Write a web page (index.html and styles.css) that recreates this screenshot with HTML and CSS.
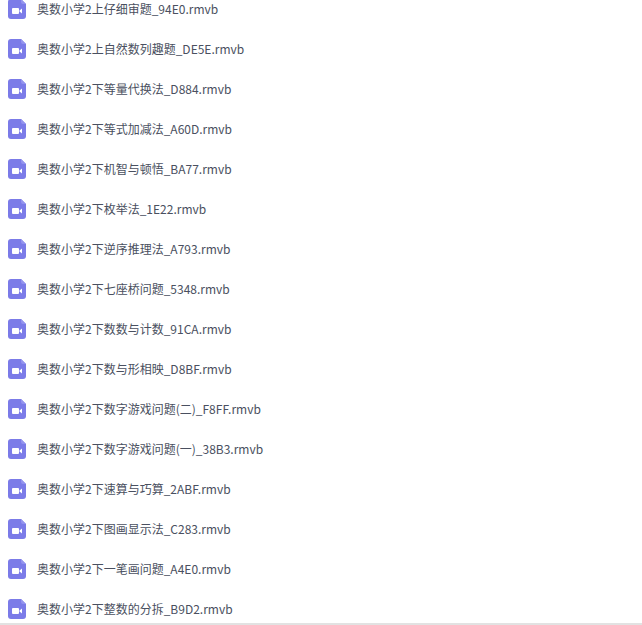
FILE: index.html
```html
<!DOCTYPE html>
<html lang="zh-CN">
<head>
    <meta charset="UTF-8">
    <meta name="viewport" content="width=device-width, initial-scale=1.0">
    <title>奥数小学2</title>
    <link rel="stylesheet" href="styles.css">
</head>
<body>
  <svg class="sprite" width="0" height="0">
    <symbol id="video" viewBox="0 0 18 20">
      <path d="M3 0H13L18 5V17A3 3 0 0 1 15 20H3A3 3 0 0 1 0 17V3A3 3 0 0 1 3 0Z" fill="#7b7be8"/>
      <path d="M13 0L18 5H15A2 2 0 0 1 13 3Z" fill="#9494ee"/>
      <rect x="4" y="9" width="7" height="6" rx="1" fill="#fff"/>
      <path d="M11.5 11.5L14 9.5V14.5L11.5 12.5Z" fill="#fff"/>
    </symbol>
  </svg>

  <ul class="file-list">
    <li class="file"><svg class="file-icon"><use href="#video"/></svg><span>奥数小学2上仔细审题_94E0.rmvb</span></li>
    <li class="file"><svg class="file-icon"><use href="#video"/></svg><span>奥数小学2上自然数列趣题_DE5E.rmvb</span></li>
    <li class="file"><svg class="file-icon"><use href="#video"/></svg><span>奥数小学2下等量代换法_D884.rmvb</span></li>
    <li class="file"><svg class="file-icon"><use href="#video"/></svg><span>奥数小学2下等式加减法_A60D.rmvb</span></li>
    <li class="file"><svg class="file-icon"><use href="#video"/></svg><span>奥数小学2下机智与顿悟_BA77.rmvb</span></li>
    <li class="file"><svg class="file-icon"><use href="#video"/></svg><span>奥数小学2下枚举法_1E22.rmvb</span></li>
    <li class="file"><svg class="file-icon"><use href="#video"/></svg><span>奥数小学2下逆序推理法_A793.rmvb</span></li>
    <li class="file"><svg class="file-icon"><use href="#video"/></svg><span>奥数小学2下七座桥问题_5348.rmvb</span></li>
    <li class="file"><svg class="file-icon"><use href="#video"/></svg><span>奥数小学2下数数与计数_91CA.rmvb</span></li>
    <li class="file"><svg class="file-icon"><use href="#video"/></svg><span>奥数小学2下数与形相映_D8BF.rmvb</span></li>
    <li class="file"><svg class="file-icon"><use href="#video"/></svg><span>奥数小学2下数字游戏问题(二)_F8FF.rmvb</span></li>
    <li class="file"><svg class="file-icon"><use href="#video"/></svg><span>奥数小学2下数字游戏问题(一)_38B3.rmvb</span></li>
    <li class="file"><svg class="file-icon"><use href="#video"/></svg><span>奥数小学2下速算与巧算_2ABF.rmvb</span></li>
    <li class="file"><svg class="file-icon"><use href="#video"/></svg><span>奥数小学2下图画显示法_C283.rmvb</span></li>
    <li class="file"><svg class="file-icon"><use href="#video"/></svg><span>奥数小学2下一笔画问题_A4E0.rmvb</span></li>
    <li class="file"><svg class="file-icon"><use href="#video"/></svg><span>奥数小学2下整数的分拆_B9D2.rmvb</span></li>
  </ul>
</body>
</html>
```

FILE: styles.css
```css
html, body {
  margin: 0;
  overflow: hidden;
  background: #fff;
}
body {
  box-sizing: border-box;
  height: 625px;
  border-bottom: 2px solid #e2e2e2;
  font-family: "Noto Sans CJK SC", "Noto Sans", sans-serif;
  font-size: 12px;
  color: #4a5060;
}
.sprite {
  position: absolute;
}
.file-list {
  list-style: none;
  margin: -11px 0 0;
  padding: 0;
}
.file {
  display: flex;
  align-items: center;
  gap: 11px;
  height: 40px;
  padding-left: 8px;
}
.file span {
  padding-bottom: 2px;
}
.file-icon {
  width: 18px;
  height: 20px;
  flex: none;
}
```
